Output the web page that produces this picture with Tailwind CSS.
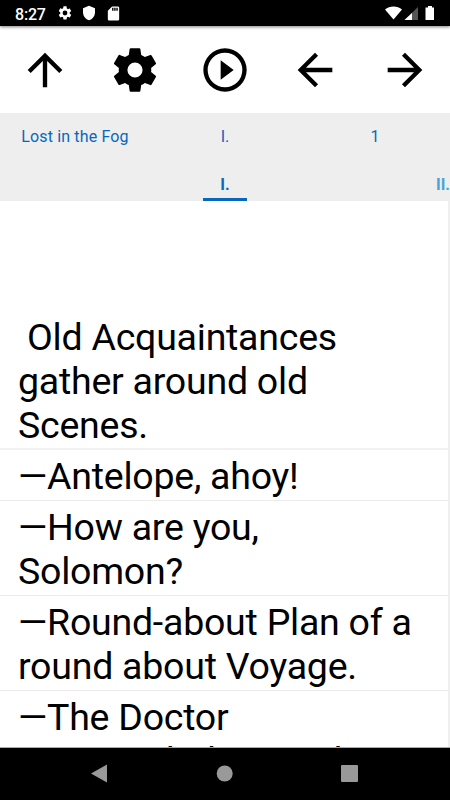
<!DOCTYPE html>
<html lang="en">
<head>
<meta charset="utf-8">
<title>Lost in the Fog</title>
<script src="https://cdn.jsdelivr.net/npm/@tailwindcss/browser@4"></script>
</head>
<body class="w-[450px] h-[800px] overflow-hidden bg-white font-[Roboto,sans-serif] text-black">
<div class="flex flex-col h-[800px]">
  <header class="relative z-10 shrink-0 h-[26px] bg-black flex items-center text-white shadow-[0_1px_3px_rgba(0,0,0,0.5)]">
    <span class="ml-[15px] w-[44px] text-[16px] leading-[26px] font-medium pt-[3px] tracking-[-0.2px]">8:27</span>
    <svg class="size-4 -ml-[2px]" viewBox="0 0 24 24" fill="currentColor"><path d="M19.14 12.94c.04-.3.06-.61.06-.94s-.02-.64-.07-.94l2.03-1.58a.49.49 0 0 0 .12-.61l-1.92-3.32a.49.49 0 0 0-.59-.22l-2.39.96a7 7 0 0 0-1.62-.94l-.36-2.54A.48.48 0 0 0 13.92 2h-3.84a.47.47 0 0 0-.47.41l-.36 2.54c-.59.24-1.13.57-1.62.94l-2.39-.96a.48.48 0 0 0-.59.22L2.74 8.87a.47.47 0 0 0 .12.61l2.03 1.58a6 6 0 0 0 0 1.88l-2.03 1.58a.49.49 0 0 0-.12.61l1.92 3.32c.12.22.37.29.59.22l2.39-.96c.5.38 1.03.7 1.62.94l.36 2.54c.05.24.24.41.48.41h3.84c.24 0 .44-.17.47-.41l.36-2.54a7 7 0 0 0 1.62-.94l2.39.96c.22.08.47 0 .59-.22l1.92-3.32a.47.47 0 0 0-.12-.61zM12 15.6A3.6 3.6 0 1 1 12 8.4a3.6 3.6 0 0 1 0 7.2z"/></svg>
    <svg class="w-4 h-4 ml-[8px]" viewBox="0 0 24 24" fill="currentColor"><path d="M12 1 3 5v6c0 5.55 3.84 10.74 9 12 5.160-1.260 9-6.450 9-12V5z"/></svg>
    <svg class="size-[17px] ml-[8px]" viewBox="0 0 24 24" fill="currentColor"><path d="M18 2h-8L4 8v12c0 1.100.9 2 2 2h12c1.100 0 2-.9 2-2V4c0-1.100-.9-2-2-2zm-6 6h-2V4h2zm3 0h-2V4h2zm3 0h-2V4h2z"/></svg>
    <svg class="w-[50px] h-[16px] ml-auto mr-[15px] mt-[1px]" viewBox="0 0 50 16"><path d="M0 3.500C4.500-.5 12.500-.5 17 3.500L8.500 13.500z" fill="#fff"/><path d="M33 1v13H19.500z" fill="#555"/><path d="M27 7v7h-7.500z" fill="#fff"/><path d="M40.500 1.500H43V0h4v1.500h2V14h-8.500z" fill="#fff"/></svg>
  </header>
  <nav class="shrink-0 h-[87px] grid grid-cols-5 place-items-center">
    <svg class="size-[52px]" viewBox="0 0 24 24"><path d="M4 12l1.410 1.410L11 7.830V20h2V7.830l5.580 5.590L20 12l-8-8z"/></svg>
    <svg class="size-[52px]" viewBox="0 0 24 24"><path d="M19.430 12.980c.04-.32.07-.64.07-.98s-.03-.66-.07-.98l2.110-1.650c.19-.15.24-.42.12-.64l-2-3.460c-.12-.22-.39-.3-.61-.22l-2.490 1c-.52-.4-1.080-.73-1.690-.98l-.38-2.650C14.460 2.180 14.250 2 14 2h-4c-.25 0-.46.18-.49.42l-.38 2.650c-.61.25-1.170.59-1.690.98l-2.490-1c-.23-.09-.49 0-.61.22l-2 3.460c-.13.22-.07.49.12.64l2.110 1.650c-.04.32-.07.65-.07.98s.03.66.07.98l-2.110 1.650c-.19.15-.24.42-.12.64l2 3.460c.12.22.39.3.61.22l2.490-1c.52.4 1.080.73 1.690.98l.38 2.650c.03.24.24.42.49.42h4c.25 0 .46-.18.49-.42l.38-2.650c.61-.25 1.170-.59 1.690-.98l2.490 1c.23.09.49 0 .61-.22l2-3.460c.12-.22.07-.49-.12-.64zM12 15.500a3.500 3.500 0 1 1 0-7 3.500 3.500 0 0 1 0 7z"/></svg>
    <svg class="size-[52px]" viewBox="0 0 24 24"><path d="M10 16.500l6-4.500-6-4.500zM12 2a10 10 0 1 0 0 20 10 10 0 0 0 0-20zm0 18a8 8 0 1 1 0-16 8 8 0 0 1 0 16z"/></svg>
    <svg class="size-[52px]" viewBox="0 0 24 24"><path d="M20 11H7.830l5.590-5.590L12 4l-8 8 8 8 1.410-1.410L7.830 13H20z"/></svg>
    <svg class="size-[52px]" viewBox="0 0 24 24"><path d="M12 4l-1.410 1.410L16.170 11H4v2h12.170l-5.580 5.590L12 20l8-8z"/></svg>
  </nav>
  <section class="shrink-0 h-[88px] bg-[#eee] text-[#0767bd] text-[16px]">
    <div class="grid grid-cols-3 h-[48px] items-center text-center leading-[48px]">
      <span class="tracking-[0.14px]">Lost in the Fog</span><span>I.</span><span>1</span>
    </div>
    <div class="flex h-[40px] overflow-hidden font-bold leading-[48px]">
      <span class="ml-[203px] w-[44px] h-[40px] shrink-0 text-center border-b-3 border-[#0767bd]">I.</span>
      <span class="ml-[189px] shrink-0 text-[#4ba3d3]">II.</span>
    </div>
  </section>
  <main class="flex-1 min-h-0 overflow-hidden border-r-2 border-[#efefef] text-[37.5px] leading-[44px] tracking-[-0.24px]">
    <p class="pt-[114px] pb-[1px] pl-[18px] border-b-2 border-[#f1f1f1]">&nbsp;Old Acquaintances<br>gather around old<br>Scenes.</p>
    <p class="pt-[4px] pb-[2px] pl-[18px] border-b border-[#ebebeb]">—Antelope, ahoy!</p>
    <p class="pt-[4px] pb-[2px] pl-[18px] border-b border-[#ebebeb]">—How are you,<br>Solomon?</p>
    <p class="pt-[4px] pb-[2px] pl-[18px] border-b border-[#ebebeb]">—Round-about Plan of a<br>round about Voyage.</p>
    <p class="pt-[4px] pl-[18px]">—The Doctor<br>warns, rebukes, and</p>
  </main>
  <footer class="shrink-0 h-[53px] bg-black border-t border-[#aaa] text-[#999]">
    <svg class="w-[450px] h-[52px]" viewBox="0 0 450 52" fill="currentColor"><path d="M91 25.500 107 16.500v18z"/><circle cx="224.700" cy="25.500" r="8"/><rect x="341" y="17" width="17" height="17" rx="1"/></svg>
  </footer>
</div>
</body>
</html>
